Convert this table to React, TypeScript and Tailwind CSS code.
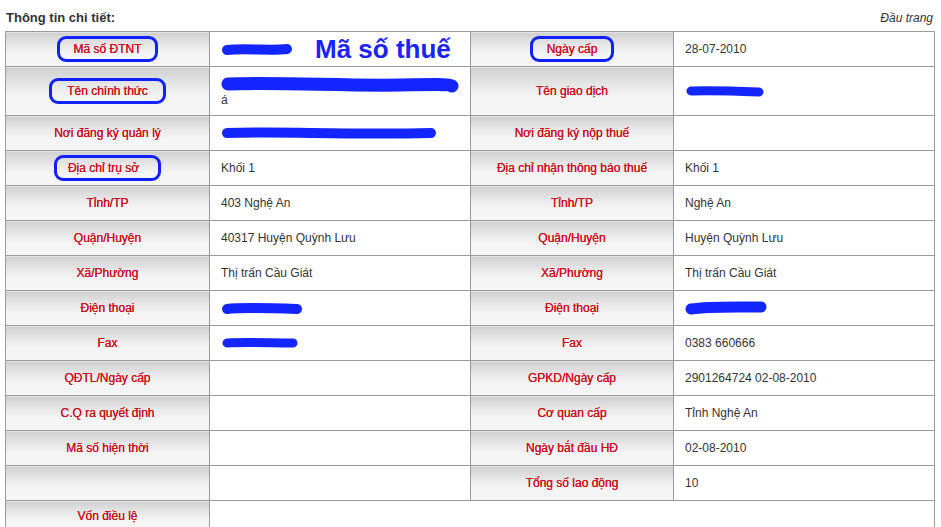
import React from "react";

/**
 * Thông tin chi tiết — tax registration detail table, with the
 * blue hand-drawn marks (ovals, scribbles) from the screenshot.
 */

type Cell = { label: string; value?: React.ReactNode; mark?: string };

function Scribble({ w, h = 14, d }: { w: number; h?: number; d: string }) {
    return (
        <svg width={w} height={h} viewBox={`0 0 ${w} ${h}`} className="block">
            <path
                d={d}
                fill="none"
                stroke="#1426ff"
                strokeWidth={h - 3}
                strokeLinecap="round"
                strokeLinejoin="round"
            />
        </svg>
    );
}

function Label({ children, mark, className = "" }: { children: React.ReactNode; mark?: string; className?: string }) {
    return (
        <td
            className={`h-[35px] border border-[#9a9a9a] bg-[linear-gradient(to_bottom,#cfcfcf,#e9e9e9_40%,#f5f5f5_65%,#f5f5f5)] p-0 text-center align-middle text-[12px] text-[#cc1020] [text-shadow:0_0_0.4px_#cc1020] ${className}`}
        >
            {mark ? (
                <span className={`inline-block rounded-[9px] border-[3px] border-[#1020ff] py-[3px] leading-[14px] ${mark}`}>
                    {children}
                </span>
            ) : (
                children
            )}
        </td>
    );
}

function Value({ children, colSpan, className = "h-[35px]" }: { children?: React.ReactNode; colSpan?: number; className?: string }) {
    return (
        <td
            colSpan={colSpan}
            className={`border border-[#9a9a9a] bg-white py-0 pl-[11px] pr-2 align-middle text-[12px] text-[#333] ${className}`}
        >
            {children}
        </td>
    );
}

const rows: [Cell, Cell][] = [
    [
        { label: "Nơi đăng ký quản lý", value: <Scribble w={216} h={13} d="M6 6 C 60 4, 120 8, 210 6" /> },
        { label: "Nơi đăng ký nộp thuế" },
    ],
    [
        { label: "Địa chỉ trụ sở", value: "Khối 1", mark: "pl-[11px] pr-[19px]" },
        { label: "Địa chỉ nhận thông báo thuế", value: "Khối 1" },
    ],
    [
        { label: "Tỉnh/TP", value: "403 Nghệ An" },
        { label: "Tỉnh/TP", value: "Nghệ An" },
    ],
    [
        { label: "Quận/Huyện", value: "40317 Huyện Quỳnh Lưu" },
        { label: "Quận/Huyện", value: "Huyện Quỳnh Lưu" },
    ],
    [
        { label: "Xã/Phường", value: "Thị trấn Cầu Giát" },
        { label: "Xã/Phường", value: "Thị trấn Cầu Giát" },
    ],
    [
        { label: "Điện thoại", value: <Scribble w={82} h={13} d="M6 7 C 20 5, 50 6, 76 7" /> },
        { label: "Điện thoại", value: <Scribble w={82} h={14} d="M6 8 C 25 5, 55 6, 76 6" /> },
    ],
    [
        { label: "Fax", value: <Scribble w={78} h={12} d="M6 6 C 25 5, 50 6, 72 6" /> },
        { label: "Fax", value: "0383 660666" },
    ],
    [
        { label: "QĐTL/Ngày cấp" },
        { label: "GPKD/Ngày cấp", value: "2901264724 02-08-2010" },
    ],
    [
        { label: "C.Q ra quyết định" },
        { label: "Cơ quan cấp", value: "Tỉnh Nghệ An" },
    ],
    [
        { label: "Mã số hiện thời" },
        { label: "Ngày bắt đầu HĐ", value: "02-08-2010" },
    ],
    [
        { label: "" },
        { label: "Tổng số lao động", value: "10" },
    ],
];

export default function App() {
    return (
        <div className="min-h-screen w-[941px] bg-white font-['Liberation_Sans',Arial,sans-serif]">
            <div className="flex h-[31px] items-center justify-between pl-[6px] pr-[8px] pt-[5px]">
                <h2 className="text-[13px] font-bold text-[#333]">Thông tin chi tiết:</h2>
                <a className="text-[12px] italic text-[#333]">Đầu trang</a>
            </div>
            <table className="ml-[5px] w-[929px] table-fixed border-collapse">
                <colgroup>
                    <col className="w-[204px]" />
                    <col className="w-[261px]" />
                    <col className="w-[203px]" />
                    <col className="w-[261px]" />
                </colgroup>
                <tbody>
                    <tr>
                        <Label mark="px-[13px]">Mã số ĐTNT</Label>
                        <Value>
                            <div className="flex items-center">
                                <Scribble w={72} h={13} d="M6 7 C 25 5, 50 8, 66 6" />
                                <span className="ml-[22px] text-[26px] leading-[28px] font-bold text-[#1a22ff]">Mã số thuế</span>
                            </div>
                        </Value>
                        <Label mark="px-[14px]">Ngày cấp</Label>
                        <Value>28-07-2010</Value>
                    </tr>
                    <tr>
                        <Label mark="px-[15px]" className="!h-[49px]">
                            Tên chính thức
                        </Label>
                        <Value className="h-[49px]">
                            <div className="pt-[2px]">
                                <Scribble w={238} h={16} d="M7 7 C 60 5, 120 9, 180 8 S 225 8, 231 9" />
                                <div className="leading-[14px]">á</div>
                            </div>
                        </Value>
                        <Label className="!h-[49px]">Tên giao dịch</Label>
                        <Value className="h-[49px]">
                            <Scribble w={80} h={12} d="M6 6 C 25 5, 50 6, 74 7" />
                        </Value>
                    </tr>
                    {rows.map(([a, b], i) => (
                        <tr key={i}>
                            <Label mark={a.mark}>{a.label}</Label>
                            <Value>{a.value}</Value>
                            <Label mark={b.mark}>{b.label}</Label>
                            <Value>{b.value}</Value>
                        </tr>
                    ))}
                    <tr>
                        <Label className="!h-[30px]">Vốn điều lệ</Label>
                        <Value colSpan={3} className="h-[30px]" />
                    </tr>
                </tbody>
            </table>
        </div>
    );
}
